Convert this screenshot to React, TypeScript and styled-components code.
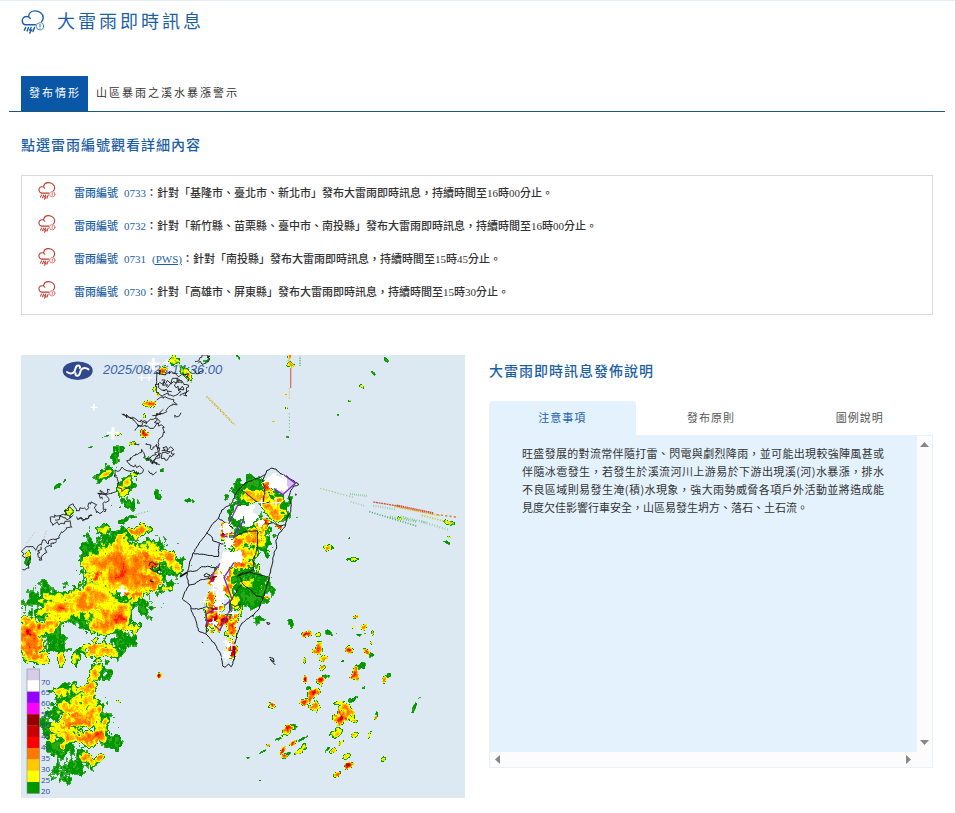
import React, { useState } from "react";
import styled, { createGlobalStyle } from "styled-components";

const sans = `"Noto Sans CJK TC", "Noto Sans", sans-serif`;
const serifMix = `"Liberation Serif", "Noto Sans CJK TC", serif`;

const GlobalStyle = createGlobalStyle`
  *, *::before, *::after { box-sizing: border-box; }
  body { margin: 0; background: #fff; color: #333; font-family: ${sans}; }
  h1, h2, p, ul { margin: 0; padding: 0; }
  button { font: inherit; border: 0; padding: 0; background: none; cursor: pointer; }
`;

const Page = styled.main`
  border-top: 1px solid #e6eff9;
  padding: 0 10px 16px 9px;
`;

const TitleBar = styled.header`
  display: flex;
  align-items: center;
  gap: 12px;
  padding: 0 12px;
  height: 42px;
`;

const Title = styled.h1`
  padding-bottom: 4px;
  font-size: 18px;
  line-height: 24px;
  font-weight: 400;
  letter-spacing: 3px;
  color: #1d5fa6;
`;

const MainTabs = styled.div`
  display: flex;
  margin-top: 33px;
  padding: 0 12px;
  border-bottom: 1px solid #1d5876;
`;

const MainTab = styled.button<{ $active: boolean }>`
  && {
    height: 35px;
    padding: 0 7px 4px 8px;
    font-size: 11px;
    letter-spacing: 2px;
    color: ${(p) => (p.$active ? "#fff" : "#333")};
    background: ${(p) => (p.$active ? "#0a57a8" : "transparent")};
  }
`;

const Content = styled.div`
  padding: 0 12px;
`;

const SectionTitle = styled.h2`
  font-size: 14px;
  line-height: 20px;
  font-weight: 500;
  letter-spacing: 1px;
  color: #1d5fa6;
`;

const ListTitle = styled(SectionTitle)`
  margin: 22px 0 21px;
`;

const AlertList = styled.ul`
  list-style: none;
  padding: 0 16px 6px;
  border: 1px solid #d9d9d9;

  && {
    padding: 0 16px 6px;
  }
`;

const AlertRow = styled.li`
  display: flex;
  align-items: center;
  gap: 18px;
  height: 33px;
  font-family: ${serifMix};
  font-size: 11px;
  line-height: 16px;
  font-weight: 500;
  color: #333;

  svg {
    margin-bottom: 3px;
  }
`;

const AlertLink = styled.a`
  color: #1d5fa6;
  text-decoration: none;
`;

const AlertNumber = styled.span`
  margin-left: 6px;
`;

const PwsLink = styled(AlertLink)`
  margin-left: 6px;
  text-decoration: underline;
`;

const Columns = styled.div`
  display: grid;
  grid-template-columns: 1fr 1fr;
  gap: 24px;
  margin-top: 40px;
`;

const Radar = styled.svg`
  display: block;
  width: 100%;
  height: auto;
  background: #dde9f2;
`;

const Side = styled.section`
  display: flex;
  flex-direction: column;
  padding-top: 5px;
`;

const NoteTabs = styled.div`
  display: flex;
  gap: 2px;
  margin-top: 21px;
`;

const NoteTab = styled.button<{ $active: boolean }>`
  && {
    flex: 1;
    height: 34px;
    padding-bottom: 2px;
    border-radius: 4px 4px 0 0;
    font-size: 11px;
    letter-spacing: 1px;
    color: ${(p) => (p.$active ? "#1d5fa6" : "#555")};
    background: ${(p) => (p.$active ? "#e3f2fd" : "transparent")};
  }
`;

const NotePanel = styled.div`
  display: grid;
  grid-template-columns: 1fr 15px;
  grid-template-rows: 1fr 15px;
  min-height: 333px;
  border: 1px solid #e6f1fa;
  background: #fcfcfc;
`;

const NoteBody = styled.div`
  padding: 8px 33px 8px 32px;
  background: #e3f2fd;
  font-size: 11px;
  line-height: 18px;
  color: #333;
`;

const NoteLine = styled.span`
  display: block;
  text-align: justify;

  &:not(:last-child) {
    text-align-last: justify;
  }
`;

const ScrollBar = styled.div<{ $vertical?: boolean }>`
  display: flex;
  flex-direction: ${(p) => (p.$vertical ? "column" : "row")};
  justify-content: space-between;
  padding: ${(p) => (p.$vertical ? "1px 0 2px" : "0 1px 0 0")};
`;

const ScrollButton = styled.button`
  && {
    display: flex;
    align-items: center;
    justify-content: center;
    width: 15px;
    height: 15px;
  }
`;

/* ---------- icons ---------- */

const StormIcon = ({ size, color }: { size: number; color: string }) => (
  <svg width={size} height={size} viewBox="0 0 24 25" fill="none" stroke={color} strokeLinecap="round" aria-hidden="true">
    <path
      strokeWidth="1.5"
      d="M3.6 15.4C1.8 14.8.8 13 .8 11.2.8 8.6 2.8 6.7 5.3 6.7c.7 0 1.4.1 2 .4C7.5 3.5 10.3.9 14 .9c4.6 0 8.600 3 8.600 7.100 0 1.700-.6 3-1.600 4.200M7.300 7.100c1 .5 1.500 1.100 1.800 1.700M4 15.400h10.500"
    />
    <path strokeWidth="1.500" d="M4.300 18.200l-1.300 2.800M7.300 18.200l-1.500 3.600M10 18.200l-1.400 2.600h1.800l-1.800 3.200M13.600 18.200l-1.600 4.200" />
    <circle cx="19.300" cy="17" r="3.800" strokeWidth=".8" />
    <path strokeWidth="1" d="M19.300 15v2.300M19.300 18.800v.2" />
  </svg>
);

const arrowPaths = {
  up: "M3 10h9L7.500 5z",
  down: "M3 5h9l-4.500 5z",
  left: "M10 3v9L5 7.500z",
  right: "M5 3v9l5-4.500z",
};

const Arrow = ({ dir, label }: { dir: keyof typeof arrowPaths; label: string }) => (
  <ScrollButton type="button" aria-label={label}>
    <svg width="15" height="15" viewBox="0 0 15 15" aria-hidden="true">
      <path d={arrowPaths[dir]} fill="#868686" />
    </svg>
  </ScrollButton>
);

/* ---------- radar echoes ---------- */

// Each tile has its own origin on the map and is drawn at three units to a map pixel.
type Tile = { x: number; y: number };
const north: Tile = { x: -6, y: -5 };
const west: Tile = { x: -6, y: 135 };
const southWest: Tile = { x: -6, y: 285 };
const island: Tile = { x: 149, y: 105 };
const northEast: Tile = { x: 219, y: -5 };
const southEast: Tile = { x: 219, y: 245 };

// centre x, centre y, radius x, radius y, rotation in degrees, peak dBZ
type Cell = [number, number, number, number, number, number];

const echoes: [Tile, Cell[]][] = [
  [north, [
    [445, 58, 14, 12, -30, 46], [480, 35, 14, 18, 0, 26], [510, 65, 24, 10, 50, 27], [575, 28, 18, 7, -20, 24],
    [420, 115, 8, 6, 0, 30], [426, 131, 6, 6, 0, 38], [403, 163, 20, 11, -30, 40], [385, 197, 6, 7, 0, 27],
    [387, 253, 10, 13, 0, 46], [352, 277, 9, 10, 0, 31], [307, 252, 10, 4, -10, 34], [275, 257, 16, 3, -20, 22],
    [308, 312, 28, 16, -70, 24], [266, 376, 38, 17, -33, 24], [268, 373, 30, 8, -33, 30], [342, 395, 18, 38, 20, 24],
    [340, 395, 12, 30, 20, 32], [355, 370, 14, 8, 0, 30],
    [396, 323, 8, 9, 0, 23], [438, 357, 6, 6, 0, 22], [425, 428, 14, 18, 0, 24], [325, 422, 22, 16, 0, 28],
    [128, 405, 14, 5, -40, 22], [150, 390, 10, 4, -40, 21], [226, 289, 10, 3, -20, 21], [668, 20, 10, 4, 40, 22],
  ]],
  [west, [
    [325, 238, 128, 92, -20, 38], [320, 230, 90, 50, -20, 39], [400, 215, 50, 30, 20, 42], [240, 262, 20, 18, 0, 46],
    [370, 122, 36, 22, 0, 36], [450, 192, 34, 22, 15, 37], [400, 272, 50, 30, 15, 40], [485, 232, 26, 16, 40, 28],
    [470, 240, 40, 30, 30, 24], [290, 160, 90, 40, -25, 23], [300, 165, 50, 30, -20, 31],
    [222, 190, 32, 50, 10, 23], [230, 230, 36, 50, 0, 32], [225, 322, 84, 44, 0, 34], [145, 348, 78, 45, 0, 34],
    [140, 350, 34, 24, 0, 38], [45, 432, 46, 52, 0, 43], [42, 436, 16, 20, 0, 49], [95, 410, 50, 24, -30, 32],
    [118, 442, 32, 26, 0, 24], [120, 470, 30, 18, 0, 23], [285, 375, 75, 60, 0, 34], [310, 385, 50, 20, 30, 40],
    [260, 410, 50, 25, 0, 34], [335, 405, 30, 24, 0, 34], [388, 350, 16, 40, -15, 24], [362, 312, 26, 34, 0, 39],
    [240, 470, 46, 26, 0, 35], [310, 440, 50, 26, 30, 24], [342, 40, 32, 18, 10, 24], [330, 2, 18, 9, 0, 28],
    [426, 8, 12, 16, 0, 24], [325, 240, 130, 105, -15, 24], [265, 340, 110, 60, 0, 24], [130, 340, 90, 48, 0, 24],
    [40, 188, 13, 16, 0, 29], [40, 212, 8, 14, 0, 23], [330, 86, 30, 6, -25, 23], [160, 65, 12, 12, 0, 26],
    [78, 280, 14, 9, 0, 19], [265, 115, 22, 14, 0, 26], [332, 310, 12, 8, 0, 46], [190, 390, 44, 20, 0, 23],
  ]],
  [southWest, [
    [50, 15, 42, 36, 0, 40], [62, 48, 42, 20, 0, 38], [137, 52, 11, 24, 0, 34], [186, 50, 16, 22, 0, 27],
    [235, 25, 30, 30, 0, 36], [275, 38, 38, 18, 0, 34], [300, 36, 34, 22, 0, 23], [250, 77, 24, 14, 0, 28],
    [265, 90, 22, 24, 0, 23], [238, 102, 16, 28, 10, 35], [205, 142, 44, 18, -15, 35], [140, 155, 28, 15, 0, 28],
    [170, 160, 56, 30, 0, 23], [215, 175, 38, 28, 0, 31], [165, 205, 52, 30, 0, 31], [120, 212, 34, 22, 0, 24],
    [175, 243, 66, 26, -8, 42], [225, 218, 38, 30, 0, 33], [248, 248, 38, 24, 10, 30], [100, 262, 32, 26, 0, 24],
    [240, 205, 34, 30, 0, 24], [260, 250, 32, 30, 0, 24],
    [235, 288, 58, 26, -10, 42], [155, 286, 58, 30, 0, 33], [285, 300, 38, 24, 0, 24], [215, 350, 32, 16, 30, 34],
    [256, 350, 18, 14, -20, 36], [192, 366, 52, 34, -10, 24], [138, 320, 48, 28, 0, 24], [190, 335, 60, 20, 30, 23],
    [150, 386, 40, 14, -25, 20], [434, 104, 8, 10, 0, 52], [148, 422, 18, 8, -45, 18], [310, 183, 8, 3, 30, 30],
  ]],
  [island, [
    [245, 78, 70, 30, -20, 24], [212, 105, 40, 32, 0, 24], [320, 135, 40, 50, 0, 24], [225, 220, 60, 60, 0, 24],
    [265, 112, 58, 26, 15, 35], [310, 145, 34, 42, 0, 34], [290, 78, 16, 22, 0, 42], [240, 230, 54, 30, 0, 34],
    [275, 192, 22, 20, 0, 46], [245, 240, 16, 12, 0, 39], [200, 245, 28, 20, 0, 42], [165, 215, 18, 26, 0, 57],
    [185, 180, 14, 34, 0, 24], [218, 285, 44, 32, 0, 33], [230, 290, 50, 46, 0, 24], [205, 312, 22, 18, 0, 40],
    [235, 310, 22, 16, 0, 36], [245, 375, 60, 40, 10, 24], [238, 372, 24, 20, 0, 27],
    [240, 408, 56, 40, 0, 24], [192, 352, 40, 22, 0, 24], [125, 350, 14, 28, 0, 48], [130, 440, 34, 22, 0, 47],
    [128, 478, 24, 30, 0, 53], [120, 412, 12, 20, 0, 44], [160, 480, 18, 16, 0, 49], [182, 470, 18, 14, 0, 43],
    [182, 503, 20, 26, 20, 43], [182, 565, 14, 38, 0, 50], [260, 475, 18, 12, 20, 23], [190, 420, 16, 26, 0, 27],
    [0, 300, 20, 38, -30, 30], [20, 310, 26, 22, 30, 24], [280, 245, 24, 40, 0, 24], [325, 198, 12, 7, 20, 47],
    [158, 335, 40, 22, 0, 40], [175, 385, 18, 34, 0, 36], [402, 522, 15, 8, 0, 46], [448, 562, 9, 22, 0, 40],
    [290, 408, 8, 6, 0, 42], [212, 450, 6, 24, 10, 28], [125, 514, 6, 8, 0, 40],
    [400, 598, 4, 7, 0, 34], [60, 122, 12, 3, 0, 18], [265, 320, 4, 20, 10, 25], [294, 272, 6, 3, 0, 26],
  ]],
  [northEast, [
    [264, 590, 17, 9, 0, 31], [342, 625, 18, 8, 0, 28], [475, 502, 6, 6, 0, 27], [436, 27, 10, 4, 35, 23],
    [399, 68, 10, 4, 30, 24], [362, 108, 8, 4, 30, 26], [326, 151, 6, 4, 10, 28], [292, 193, 6, 3, 0, 23],
    [136, 132, 6, 3, 0, 38], [140, 173, 5, 4, 0, 30], [142, 259, 5, 4, 0, 23], [97, 214, 5, 2, 0, 40],
    [148, 22, 8, 10, 0, 36], [150, 43, 12, 8, 0, 34], [614, 575, 13, 5, 20, 22], [630, 518, 18, 7, 10, 26],
    [626, 560, 8, 3, 20, 25], [328, 563, 3, 3, 0, 22],
  ]],
  [southEast, [
    [195, 102, 17, 9, 0, 46], [238, 135, 10, 16, 0, 44], [232, 148, 16, 10, 0, 38], [250, 175, 12, 8, 0, 36],
    [248, 200, 12, 7, 0, 37], [240, 240, 17, 11, -20, 43], [258, 229, 11, 10, 0, 24], [215, 283, 24, 18, -15, 50],
    [192, 303, 15, 13, -30, 46], [225, 320, 19, 12, -10, 38], [203, 262, 9, 6, 0, 23], [325, 149, 16, 13, 20, 48],
    [347, 217, 16, 16, 0, 47], [357, 200, 18, 9, -25, 24], [342, 235, 4, 6, 0, 23], [338, 294, 18, 8, -38, 24],
    [296, 352, 22, 16, -45, 49], [322, 333, 30, 18, 50, 36], [300, 307, 20, 8, -10, 28], [92, 318, 11, 9, 0, 44],
    [138, 391, 22, 15, -50, 47], [155, 382, 10, 10, 0, 24], [126, 452, 13, 8, -50, 48], [134, 468, 12, 8, -20, 41],
    [145, 459, 9, 5, -40, 24], [156, 427, 12, 5, -25, 48], [180, 444, 22, 9, -50, 30], [196, 236, 5, 12, 0, 46],
    [432, 238, 8, 13, 10, 38], [444, 227, 7, 6, -30, 24], [378, 152, 12, 8, 0, 41], [390, 160, 8, 10, 0, 23],
    [346, 50, 9, 7, 0, 38], [372, 80, 10, 8, 0, 37], [338, 79, 4, 6, 0, 34], [354, 102, 8, 6, 0, 23],
    [374, 97, 8, 5, 0, 23], [397, 98, 3, 8, 0, 33], [394, 126, 3, 6, 0, 33], [370, 260, 7, 6, 0, 28],
    [405, 352, 6, 6, 0, 40], [408, 340, 4, 8, 0, 23], [388, 402, 12, 5, -60, 28], [343, 402, 12, 5, -45, 30],
    [285, 397, 20, 11, -40, 27], [302, 428, 11, 5, -45, 31], [262, 445, 14, 5, -60, 23], [276, 450, 11, 6, -45, 30],
    [321, 468, 17, 9, -25, 28], [324, 498, 14, 8, -45, 48], [290, 521, 13, 7, -40, 39], [427, 476, 12, 6, -50, 27],
    [521, 322, 5, 16, 20, 24], [537, 293, 4, 6, 30, 22], [84, 435, 5, 4, 0, 38], [66, 453, 12, 3, -30, 24],
    [58, 539, 6, 3, 0, 23], [191, 180, 4, 9, 0, 32], [272, 98, 14, 7, 0, 20], [150, 70, 10, 10, 0, 19],
    [232, 102, 9, 7, 0, 31], [118, 416, 12, 4, -30, 22], [30, 8, 36, 14, 0, 24], [48, 56, 15, 7, 20, 24],
    [20, 473, 6, 3, 0, 21], [188, 416, 16, 3, -30, 20], [306, 182, 4, 3, 0, 23], [407, 240, 4, 3, 0, 22],
  ]],
];

// Areas packed with lightning marks.
const flashes: [Tile, Cell[]][] = [
  [island, [
    [318, 62, 32, 20, 20, 33], [332, 78, 20, 14, 0, 33], [225, 160, 26, 30, 0, 33], [205, 165, 18, 14, 0, 33],
    [238, 182, 14, 14, 0, 33], [170, 205, 11, 16, 0, 33], [272, 188, 10, 12, 0, 30], [178, 246, 12, 18, 0, 25],
    [175, 296, 28, 20, 0, 33], [204, 292, 12, 18, 0, 33], [155, 325, 17, 20, 0, 33], [145, 365, 18, 24, 0, 33],
    [148, 400, 24, 24, 0, 33], [145, 428, 18, 10, 0, 27], [130, 490, 12, 10, 0, 27], [170, 550, 9, 12, 0, 27],
    [172, 585, 9, 14, 0, 25],
  ]],
];

const scale: [number, string][] = [
  [70, "#d6cce6"], [65, "#ffffff"], [60, "#9600ff"], [55, "#ff00ff"], [50, "#960000"], [45, "#c80000"],
  [40, "#ff0000"], [35, "#ff7800"], [30, "#ffc800"], [25, "#ffff00"], [20, "#009600"],
];

const hash = (x: number, y: number) => {
  let h = Math.imul(x, 374761393) ^ Math.imul(y, 668265263);
  h = Math.imul(h ^ (h >>> 13), 1274126177);
  return ((h ^ (h >>> 16)) >>> 0) / 4294967295;
};

const noise = (x: number, y: number) => {
  const xi = Math.floor(x), yi = Math.floor(y);
  const fx = x - xi, fy = y - yi;
  const top = hash(xi, yi) * (1 - fx) + hash(xi + 1, yi) * fx;
  const bottom = hash(xi, yi + 1) * (1 - fx) + hash(xi + 1, yi + 1) * fx;
  return (top * (1 - fy) + bottom * fy) * 2 - 1;
};

const MAP_W = 444;
const MAP_H = 443;

function field(groups: [Tile, Cell[]][], keep: (peak: number) => boolean) {
  const grid = new Float32Array(MAP_W * MAP_H);
  groups.forEach(([tile, cells]) =>
    cells.forEach(([cx, cy, rx, ry, deg, peak]) => {
      if (!keep(peak)) return;
      const x0 = cx / 3 + tile.x, y0 = cy / 3 + tile.y;
      const a = rx / 3, b = ry / 3;
      const bend = Math.min(9, Math.min(a, b) * 0.9);
      const cos = Math.cos((deg * Math.PI) / 180), sin = Math.sin((deg * Math.PI) / 180);
      const reach = Math.max(a, b) * 1.6 + 3;
      for (let y = Math.max(0, Math.floor(y0 - reach)); y < Math.min(MAP_H, y0 + reach); y++) {
        for (let x = Math.max(0, Math.floor(x0 - reach)); x < Math.min(MAP_W, x0 + reach); x++) {
          const dx = x - x0 + bend * (noise(x / 6, y / 6) * 0.7 + noise(x / 2.5 + 31, y / 2.5) * 0.45);
          const dy = y - y0 + bend * (noise(x / 6 + 70, y / 6) * 0.7 + noise(x / 2.5, y / 2.5 + 57) * 0.45);
          const u = (dx * cos + dy * sin) / a;
          const v = (dy * cos - dx * sin) / b;
          const value = peak - (peak - 17) * (u * u + v * v);
          const i = y * MAP_W + x;
          if (value > grid[i]) grid[i] = value;
        }
      }
    })
  );
  return grid;
}

function rasterize(grid: Float32Array, colorAt: (v: number) => string | null) {
  const paths: Record<string, string> = {};
  for (let y = 0; y < MAP_H; y++) {
    let start = 0;
    let current: string | null = null;
    for (let x = 0; x <= MAP_W; x++) {
      let color: string | null = null;
      if (x < MAP_W && grid[y * MAP_W + x] > 8) {
        const rough = noise(x / 2 + 90, y / 4) * 3.5 + noise(x / 6, y / 6 + 40) * 5 + (hash(x, y) - 0.5) * 2;
        color = colorAt(grid[y * MAP_W + x] + rough);
      }
      if (color !== current) {
        if (current) paths[current] = (paths[current] || "") + `M${start} ${y}h${x - start}v1h${start - x}z`;
        start = x;
        current = color;
      }
    }
  }
  return Object.entries(paths);
}

const shades: [number, string][] = [
  [50, "#960000"], [46, "#c80000"], [42, "#ff1e00"], [39, "#ff5a00"], [35, "#ff7800"], [32, "#ffa000"],
  [29, "#ffc800"], [24, "#ffff00"], [22, "#c8e600"], [20, "#32aa1e"], [17, "#009600"],
];
const drizzle: [number, string][] = [[24, "#28a814"], [19, "#009600"], [17, "#3cab32"]];
const pick = (table: [number, string][]) => (v: number) => table.find(([min]) => v >= min)?.[1] ?? null;

const greenPaths = rasterize(field(echoes, (p) => p <= 24), pick(drizzle));
const echoPaths = rasterize(field(echoes, (p) => p > 24), pick(shades));
const flashPaths = rasterize(field(flashes, () => true), (v) => (v >= 19 ? "#ffffff" : null));

/* ---------- coastlines ---------- */

// Breaks a polyline into short uneven segments.
function coast(line: string, wobble: number) {
  const pts = line.split(" ").map((p) => p.split(",").map(Number));
  let d = `M${pts[0][0]} ${pts[0][1]}`;
  for (let i = 1; i < pts.length; i++) {
    const [ax, ay] = pts[i - 1];
    const [bx, by] = pts[i];
    const n = Math.max(1, Math.round(Math.hypot(bx - ax, by - ay) / 6));
    for (let k = 1; k <= n; k++) {
      const t = k / n;
      const j = k === n ? 0 : wobble;
      const x = ax + (bx - ax) * t + (hash(ax + k, by) - 0.5) * j;
      const y = ay + (by - ay) * t + (hash(bx, ay + k) - 0.5) * j;
      d += `L${x.toFixed(1)} ${y.toFixed(1)}`;
    }
  }
  return d;
}

const coastlines: [Tile, number, string[]][] = [
  [north, 13, [
    "425,82 432,60 450,75 470,65 490,80 520,70 518,95", "420,105 445,95 470,100 500,92 520,105 512,130 495,138",
    "425,82 420,105 430,130 460,135 490,130 500,110", "440,90 455,110 480,85 500,100", "425,150 445,145 470,148 485,165 460,172 440,190 412,195",
    "430,100 440,120 455,118 470,125", "485,85 478,105 490,118 505,112",
    "320,192 345,205 375,228 405,235 430,220 448,232 440,260 430,275 432,305 415,335 435,345", "325,196 350,203 385,216 420,205 430,192 445,178",
    "360,242 368,225 395,215", "395,280 410,300 425,283 430,305 410,318 405,335 425,325 438,310", "445,300 470,292 478,312 450,330 440,315 465,305 455,290 440,302",
    "335,332 362,312 380,298 388,320 400,330 425,345", "335,332 345,345 382,355 375,372 345,365 325,355 300,360 298,380 307,400 320,425 345,415",
    "400,362 412,375 425,366", "285,420 270,432 248,430 262,448", "540,35 560,22 585,18 575,38 550,40", "480,203 498,188",
    "530,60 545,72 565,62", "505,135 522,122", "425,205 435,215 418,217 425,205", "357,283 372,281",
  ]],
  [west, 12, [
    "255,0 272,15 282,32 265,50 270,66 245,68 240,42 222,38 215,60 200,55 183,62 175,42 160,55 150,75 110,80 112,100 148,102 165,92 170,112 140,125 125,150 112,148 100,162 90,150 78,165",
    "78,165 60,178 45,168 25,178 22,198 45,205 42,235 22,238", "185,80 205,92 230,75 212,88 190,88", "78,170 68,190 72,210 90,190 95,170 125,155",
    "120,90 140,80 160,88 175,75", "255,5 280,12 305,3",
  ]],
  [west, 12, ["402,228 412,215 430,222 436,240 420,245 405,236 425,228 415,218", "405,272 415,276 408,268"]],
  [island, 3, [
    "285,45 290,32 302,25 318,27 330,40 350,48 366,60 386,74 372,78 362,92 356,110 364,135 362,155 352,170 345,200 328,218 318,240 320,260 310,290 302,330 296,360 290,380 280,410 268,445 245,468 215,490 200,525 194,560 192,600 184,620 176,612 165,622 158,618 155,590 140,560 120,535 108,522 85,512 80,490 68,460 60,435 37,417 45,395 57,375 50,350 57,320 62,300 70,278 85,255 110,220 125,195 145,175 155,150 185,130 200,95 225,70 260,55 285,45",
    "145,175 165,188 190,205", "110,218 125,230 128,242 160,252", "70,280 100,283 145,290 148,250", "55,335 80,332 95,320 120,320 140,325",
    "57,375 75,372 90,360 125,355 150,345", "102,345 110,340 120,345 116,351 104,350 102,345", "64,445 85,448 110,440 140,450", "106,450 110,485 108,520",
    "215,90 235,105 255,122 275,132 300,125", "285,45 278,60 284,90 280,130", "345,195 330,198 310,188 290,192", "190,232 225,215 262,212 262,260 252,300 250,330 200,350",
    "205,345 220,338 250,340 295,350", "210,350 218,372 245,392 258,408 278,412", "180,478 178,430 205,385 215,375", "180,430 195,440 212,432",
    "375,105 379,105 377,101", "290,488 300,490 295,495 290,488", "298,592 310,595 312,606 300,598 316,615", "95,546 100,549",
  ]],
];

const warnings = [
  "342,45 376,70 338,104 312,86", "208,125 176,192M222,178 188,236 152,224", "150,310 122,352 132,365M192,308 162,352 186,418 165,436",
  "138,448 108,462 112,500M185,440 150,510 120,485",
];

const strikes: [Tile, number, [number, number][]][] = [
  [north, 10, [[237, 172], [380, 83], [402, 83], [455, 38]]],
  [north, 18, [[294, 250], [415, 42]]],
  [west, 16, [[322, 302]]],
  [island, 14, [
    [318, 128], [268, 188], [275, 128], [180, 250], [175, 235], [172, 262], [160, 205], [145, 345], [200, 295], [160, 415],
    [145, 452], [130, 488], [172, 545], [172, 575], [190, 460], [130, 390], [215, 150], [105, 425], [185, 555], [168, 592],
  ]],
];

// tile, x1, y1, x2, y2, width, dash pattern, colour
const beams: [Tile, number, number, number, number, number, string, string][] = [
  [north, 575, 138, 660, 225, 5, "5 3", "#e8c43c"], [north, 573, 141, 657, 225, 2, "3 9", "#39a53a"],
  [north, 590, 152, 645, 208, 2, "4 8", "#f07a28"], [north, 474, 22, 530, 98, 4, "6 4", "#a3c43c"],
  [northEast, 152, 55, 152, 115, 4, "4 2", "#d94c30"], [northEast, 148, 115, 148, 150, 3, "4 5", "#c9c545"],
  [northEast, 148, 190, 148, 245, 3, "3 7", "#5fb166"], [northEast, 180, 20, 180, 50, 6, "2 3", "#68b77a"],
  [northEast, 145, 30, 160, 50, 8, "2 3", "#e08c20"], [northEast, 240, 415, 340, 442, 4, "4 5", "#a9cf78"],
  [northEast, 330, 432, 382, 438, 6, "2 4", "#70bd84"], [northEast, 332, 455, 375, 468, 5, "2 6", "#7cc18c"],
  [northEast, 400, 456, 480, 469, 4, "6 2", "#d2513c"], [northEast, 470, 467, 580, 490, 7, "4 2", "#d8402a"],
  [northEast, 462, 470, 600, 497, 4, "5 3", "#d3c92f"], [northEast, 590, 494, 655, 502, 4, "6 7", "#df7530"],
  [northEast, 545, 496, 645, 522, 5, "4 4", "#c3cc4a"], [northEast, 388, 485, 530, 528, 5, "3 5", "#45a55c"],
  [northEast, 450, 500, 530, 515, 7, "2 5", "#67b66c"], [northEast, 482, 500, 560, 518, 7, "2 5", "#70ba7e"],
  [northEast, 545, 515, 628, 540, 8, "2 6", "#88c596"], [northEast, 400, 467, 465, 478, 7, "2 5", "#86c394"],
  [west, 335, 82, 405, 62, 2, "4 5", "#4ba85a"], [west, 35, 160, 62, 124, 2, "5 4", "#dda092"],
  [west, 70, 195, 94, 122, 2, "6 3", "#dda092"], [west, 72, 214, 98, 178, 2, "5 3", "#8dc796"],
];

const place = (t: Tile) => `translate(${t.x} ${t.y}) scale(.33333)`;

const Pixels = ({ paths }: { paths: [string, string][] }) => (
  <g shapeRendering="crispEdges">
    {paths.map(([color, d]) => (
      <path key={color} d={d} fill={color} />
    ))}
  </g>
);

const RadarMap = () => (
  <Radar viewBox={`0 0 ${MAP_W} ${MAP_H}`} role="img" aria-label="雷達回波圖">
    <rect width={MAP_W} height={MAP_H} fill="#dde9f2" />
    <ellipse cx="56.700" cy="15.700" rx="15" ry="9.300" fill="#30488c" />
    <path
      d="M46 17c2.500 2 6 2 7.500-.6 1.300-2.300.8-5.800 3.600-5.800 1.700 0 2.400 1.400 1.700 2.400M67.500 14.400c-2.500-2-6-2-7.500.6-1.300 2.300-.8 5.800-3.600 5.800-1.700 0-2.400-1.400-1.700-2.400"
      fill="none"
      stroke="#fff"
      strokeWidth="2"
      strokeLinecap="round"
    />
    <text x="82" y="19" fontFamily="Liberation Sans, Arial, sans-serif" fontStyle="italic" fontSize="13" fill="#3a62ab">
      2025/08/26 14:36:00
    </text>
    <Pixels paths={greenPaths} />
    <Pixels paths={echoPaths} />
    {scale.map(([dbz, color], i) => (
      <g key={dbz}>
        <rect x="6" y={314 + i * 11.3} width="12.500" height="11.500" fill={color} />
        <text x="20" y={329.500 + i * 10.900} fontFamily="Open Sans, sans-serif" fontSize="8" fill="#2c4690">
          {dbz}
        </text>
      </g>
    ))}
    <rect x="6" y="314" width="12.500" height="124.500" fill="none" stroke="#8a8a9a" strokeWidth=".6" />
    {beams.map(([tile, x1, y1, x2, y2, width, dash, color], i) => (
      <line key={i} transform={place(tile)} x1={x1} y1={y1} x2={x2} y2={y2} stroke={color} strokeWidth={width} strokeDasharray={dash} />
    ))}
    {coastlines.map(([tile, wobble, lines], i) => (
      <g key={i} transform={place(tile)} fill="none" stroke="#141414" strokeWidth={tile === island ? 3 : 2.6} strokeLinejoin="round">
        {lines.map((line) => (
          <path key={line} d={coast(line, wobble)} />
        ))}
      </g>
    ))}
    <path transform={place(island)} d="M30 350l22-13" stroke="#141414" strokeWidth="5" />
    <path transform={place(island)} d="M342 45l34 25-38 34-26-18z" fill="#d5c4f2" />
    <Pixels paths={flashPaths} />
    <g transform={place(island)} fill="none" stroke="#7d28be" strokeWidth="4">
      {warnings.map((w) => (
        <path key={w} d={`M${w}`} />
      ))}
    </g>
    {strikes.map(([tile, size, points], i) => (
      <g key={i} transform={place(tile)} stroke="#fff" strokeWidth={size > 15 ? 9 : 4}>
        {points.map(([x, y]) => (
          <path key={`${x}-${y}`} d={`M${x - size} ${y}h${size * 2}M${x} ${y - size}v${size * 2}`} />
        ))}
      </g>
    ))}
  </Radar>
);

/* ---------- page ---------- */

const alerts = [
  { id: "0733", pws: false, text: "針對「基隆市、臺北市、新北市」發布大雷雨即時訊息，持續時間至16時00分止。" },
  { id: "0732", pws: false, text: "針對「新竹縣、苗栗縣、臺中市、南投縣」發布大雷雨即時訊息，持續時間至16時00分止。" },
  { id: "0731", pws: true, text: "針對「南投縣」發布大雷雨即時訊息，持續時間至15時45分止。" },
  { id: "0730", pws: false, text: "針對「高雄市、屏東縣」發布大雷雨即時訊息，持續時間至15時30分止。" },
];

const noteLines = [
  "旺盛發展的對流常伴隨打雷、閃電與劇烈降雨，並可能出現較強陣風甚或",
  "伴隨冰雹發生，若發生於溪流河川上游易於下游出現溪(河)水暴漲，排水",
  "不良區域則易發生淹(積)水現象，強大雨勢威脅各項戶外活動並將造成能",
  "見度欠佳影響行車安全，山區易發生坍方、落石、土石流。",
];

const mainTabs = ["發布情形", "山區暴雨之溪水暴漲警示"];
const noteTabs = ["注意事項", "發布原則", "圖例說明"];

export default function App() {
  const [mainTab, setMainTab] = useState(0);
  const [noteTab, setNoteTab] = useState(0);

  return (
    <>
      <GlobalStyle />
      <Page lang="zh-Hant">
        <TitleBar>
          <StormIcon size={24} color="#1d5fa6" />
          <Title>大雷雨即時訊息</Title>
        </TitleBar>
        <MainTabs role="tablist">
          {mainTabs.map((label, i) => (
            <MainTab key={label} type="button" role="tab" aria-selected={i === mainTab} $active={i === mainTab} onClick={() => setMainTab(i)}>
              {label}
            </MainTab>
          ))}
        </MainTabs>
        <Content>
          <ListTitle>點選雷雨編號觀看詳細內容</ListTitle>
          <AlertList>
            {alerts.map((a) => (
              <AlertRow key={a.id}>
                <StormIcon size={18} color="#c0392f" />
                <span>
                  <AlertLink href={`#${a.id}`}>
                    雷雨編號<AlertNumber>{a.id}</AlertNumber>
                  </AlertLink>
                  {a.pws && <PwsLink href={`#pws-${a.id}`}>(PWS)</PwsLink>}
                  ：{a.text}
                </span>
              </AlertRow>
            ))}
          </AlertList>
          <Columns>
            <RadarMap />
            <Side>
              <SectionTitle>大雷雨即時訊息發佈說明</SectionTitle>
              <NoteTabs role="tablist">
                {noteTabs.map((label, i) => (
                  <NoteTab key={label} type="button" role="tab" aria-selected={i === noteTab} $active={i === noteTab} onClick={() => setNoteTab(i)}>
                    {label}
                  </NoteTab>
                ))}
              </NoteTabs>
              <NotePanel role="tabpanel">
                <NoteBody>
                  <p>
                    {noteLines.map((line) => (
                      <NoteLine key={line}>{line}</NoteLine>
                    ))}
                  </p>
                </NoteBody>
                <ScrollBar $vertical>
                  <Arrow dir="up" label="向上捲動" />
                  <Arrow dir="down" label="向下捲動" />
                </ScrollBar>
                <ScrollBar>
                  <Arrow dir="left" label="向左捲動" />
                  <Arrow dir="right" label="向右捲動" />
                </ScrollBar>
              </NotePanel>
            </Side>
          </Columns>
        </Content>
      </Page>
    </>
  );
}
